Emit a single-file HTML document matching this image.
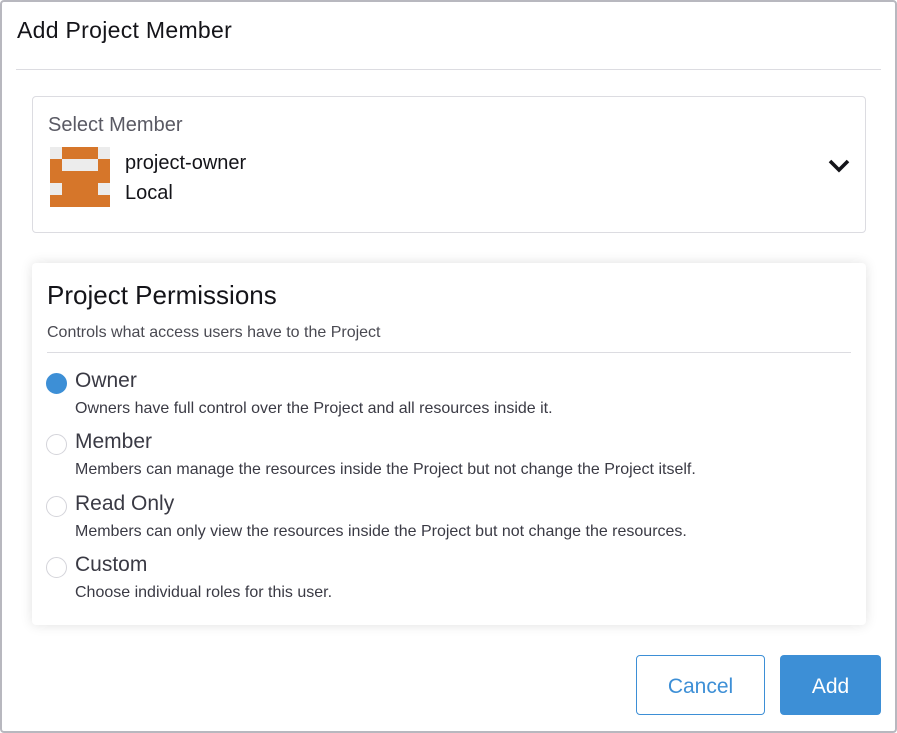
<!DOCTYPE html>
<html><head><style>
*{box-sizing:border-box;margin:0;padding:0}
body{width:897px;height:733px;background:#fff;font-family:"Liberation Sans",sans-serif;color:#141419;position:relative;overflow:hidden}
.frame{position:absolute;left:0;top:0;width:897px;height:733px;border:2px solid #b8b8bf;border-radius:4px}
h1{position:absolute;left:17px;top:17px;font-size:23px;font-weight:400;letter-spacing:.3px}
.hr{position:absolute;left:16px;right:16px;top:69px;height:1px;background:#dcdce1}
.sel{position:absolute;left:32px;top:96px;width:834px;height:137px;border:1px solid #dcdce1;border-radius:4px}
.sel .lbl{position:absolute;left:15px;top:17px;font-size:20px;color:#5a5a64}
.av{position:absolute;left:17px;top:50px;width:60px;height:60px;background:#d6762a}
.av i{position:absolute;width:12px;height:12px;background:#ececec}
.name{position:absolute;left:92px;top:51px;font-size:20px;line-height:30px}
.chev{position:absolute;right:15px;top:62px}
.perm{position:absolute;left:32px;top:263px;width:834px;height:362px;background:#fff;border-radius:4px;box-shadow:0 0 12px rgba(0,0,0,.12)}
.perm h2{position:absolute;left:15px;top:17px;font-size:26px;font-weight:400}
.perm .sub{position:absolute;left:15px;top:61px;font-size:16px;color:#4a4a52}
.perm .line{position:absolute;left:15px;right:15px;top:89px;height:1px;background:#dcdce1}
.opt{position:absolute;left:14px}
.rad{position:absolute;left:0;top:3px;width:21px;height:21px;border-radius:50%;border:1.5px solid #d4d4da}
.rad.on{background:#3d8fd6;border-color:#3d8fd6}
.opt .t{position:absolute;left:29px;top:-1px;font-size:21px;color:#3a3a44;white-space:nowrap}
.opt .d{position:absolute;left:29px;top:30px;font-size:16px;color:#3a3a44;white-space:nowrap}
.btn{position:absolute;top:655px;height:60px;border-radius:4px;font-size:21px;display:flex;align-items:center;justify-content:center;padding-top:3px}
.cancel{left:636px;width:129px;border:1px solid #3d8fd6;color:#3d8fd6;background:#fff}
.add{left:780px;width:101px;background:#3d8fd6;color:#fff}
</style></head><body>
<div class="frame"></div>
<h1>Add Project Member</h1>
<div class="hr"></div>
<div class="sel">
<div class="lbl">Select Member</div>
<div class="av"><i style="left:0;top:0"></i><i style="left:48px;top:0"></i><i style="left:12px;top:12px;width:36px"></i><i style="left:0;top:36px"></i><i style="left:48px;top:36px"></i></div>
<div class="name">project-owner<br>Local</div>
<svg class="chev" width="22" height="14" viewBox="0 0 22 14"><path d="M2 2l9 9 9-9" stroke="#141419" stroke-width="3.6" fill="none"/></svg>
</div>
<div class="perm">
<h2>Project Permissions</h2>
<div class="sub">Controls what access users have to the Project</div>
<div class="line"></div>
<div class="opt" style="top:107px"><div class="rad on"></div><div class="t">Owner</div><div class="d">Owners have full control over the Project and all resources inside it.</div></div>
<div class="opt" style="top:168px"><div class="rad"></div><div class="t">Member</div><div class="d">Members can manage the resources inside the Project but not change the Project itself.</div></div>
<div class="opt" style="top:230px"><div class="rad"></div><div class="t">Read Only</div><div class="d">Members can only view the resources inside the Project but not change the resources.</div></div>
<div class="opt" style="top:291px"><div class="rad"></div><div class="t">Custom</div><div class="d">Choose individual roles for this user.</div></div>
</div>
<div class="btn cancel">Cancel</div>
<div class="btn add">Add</div>
</body></html>
